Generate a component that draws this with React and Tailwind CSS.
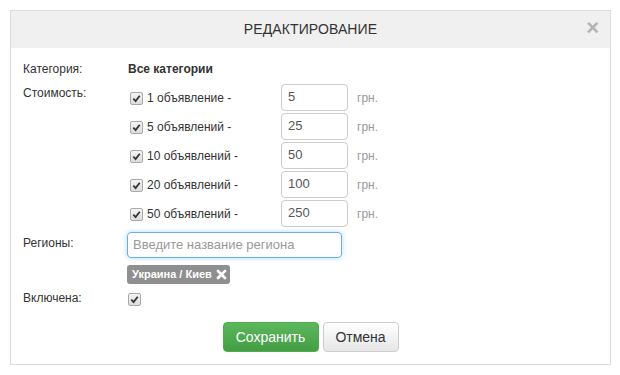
import React from 'react';

const rows = [
  { label: '1 объявление -', value: '5' },
  { label: '5 объявлений -', value: '25' },
  { label: '10 объявлений -', value: '50' },
  { label: '20 объявлений -', value: '100' },
  { label: '50 объявлений -', value: '250' },
];

function Check() {
  return (
    <span className="w-[13px] h-[13px] shrink-0 rounded-[2px] border border-[#a9a9a9] bg-gradient-to-b from-[#f4f4f4] to-[#dcdcdc] flex items-center justify-center">
      <svg width="9" height="9" viewBox="0 0 10 10">
        <path d="M1.5 5.2 L4 7.8 L8.6 2" fill="none" stroke="#333" strokeWidth="2" />
      </svg>
    </span>
  );
}

export default function App() {
  return (
    <div className="w-[620px] h-[375px] bg-white pt-[10px] pl-[10px] font-['Liberation_Sans',Arial,sans-serif] text-[12px] text-[#333]">
      <div className="w-[601px] h-[355px] border border-[#dcdcdc] flex flex-col">
        {/* Header */}
        <div className="h-[37px] bg-[#f0f0f0] relative flex items-center justify-center">
          <span className="text-[14px] text-[#333] tracking-[0.1px]">РЕДАКТИРОВАНИЕ</span>
          <span className="absolute right-[11px] top-[6px] text-[22px] leading-[22px] font-bold text-[#b3b3b3]">×</span>
        </div>

        {/* Body */}
        <div className="pl-[12px] pt-[13px] flex flex-col">
          <div className="flex items-center h-[16px]">
            <span className="w-[105px]">Категория:</span>
            <span className="font-bold">Все категории</span>
          </div>

          <div className="flex mt-[7px]">
            <span className="w-[105px] pt-[2px] leading-[14px]">Стоимость:</span>
            <div className="flex flex-col gap-[2px]">
              {rows.map((r) => (
                <div key={r.label} className="flex items-center h-[27px]">
                  <div className="w-[153px] pl-[2px] flex items-center gap-[4px] pt-[1px]">
                    <Check />
                    <span>{r.label}</span>
                  </div>
                  <div className="w-[67px] h-[27px] border border-[#ccc] rounded-[4px] px-[6px] flex items-center text-[13px] text-[#555] pb-[1px]">
                    {r.value}
                  </div>
                  <span className="ml-[9px] text-[#999] pt-[1px]">грн.</span>
                </div>
              ))}
            </div>
          </div>

          <div className="flex mt-[5px]">
            <span className="w-[104px] pt-[4px] leading-[14px]">Регионы:</span>
            <div className="flex flex-col">
              <div className="w-[215px] h-[26px] border border-[#66afe9] rounded-[4px] shadow-[0_0_5px_rgba(102,175,233,0.5)] px-[5px] flex items-center text-[13px] text-[#999]">
                Введите название региона
              </div>
              <div className="mt-[7px] w-[103px] h-[19px] bg-[#8f8f8f] rounded-[3px] flex items-center pl-[5px] gap-[4px] text-white text-[11px] font-bold">
                <span>Украина / Киев</span>
                <svg width="11" height="11" viewBox="0 0 10 10">
                  <path d="M1.8 1.8 L8.2 8.2 M8.2 1.8 L1.8 8.2" stroke="#fff" strokeWidth="2.4" strokeLinecap="round" />
                </svg>
              </div>
            </div>
          </div>

          <div className="flex mt-[6px] items-center">
            <span className="w-[105px] leading-[14px]">Включена:</span>
            <div className="pt-[3px]">
              <Check />
            </div>
          </div>

          <div className="flex justify-center gap-[4px] mt-[16px] pr-[12px]">
            <div className="w-[96px] h-[30px] rounded-[4px] border border-[#4cae4c] bg-gradient-to-b from-[#5cb85c] to-[#449d44] text-white text-[14px] flex items-center justify-center">
              Сохранить
            </div>
            <div className="w-[76px] h-[30px] rounded-[4px] border border-[#ccc] bg-gradient-to-b from-[#ffffff] to-[#e6e6e6] text-[#333] text-[14px] flex items-center justify-center">
              Отмена
            </div>
          </div>
        </div>
      </div>
    </div>
  );
}
